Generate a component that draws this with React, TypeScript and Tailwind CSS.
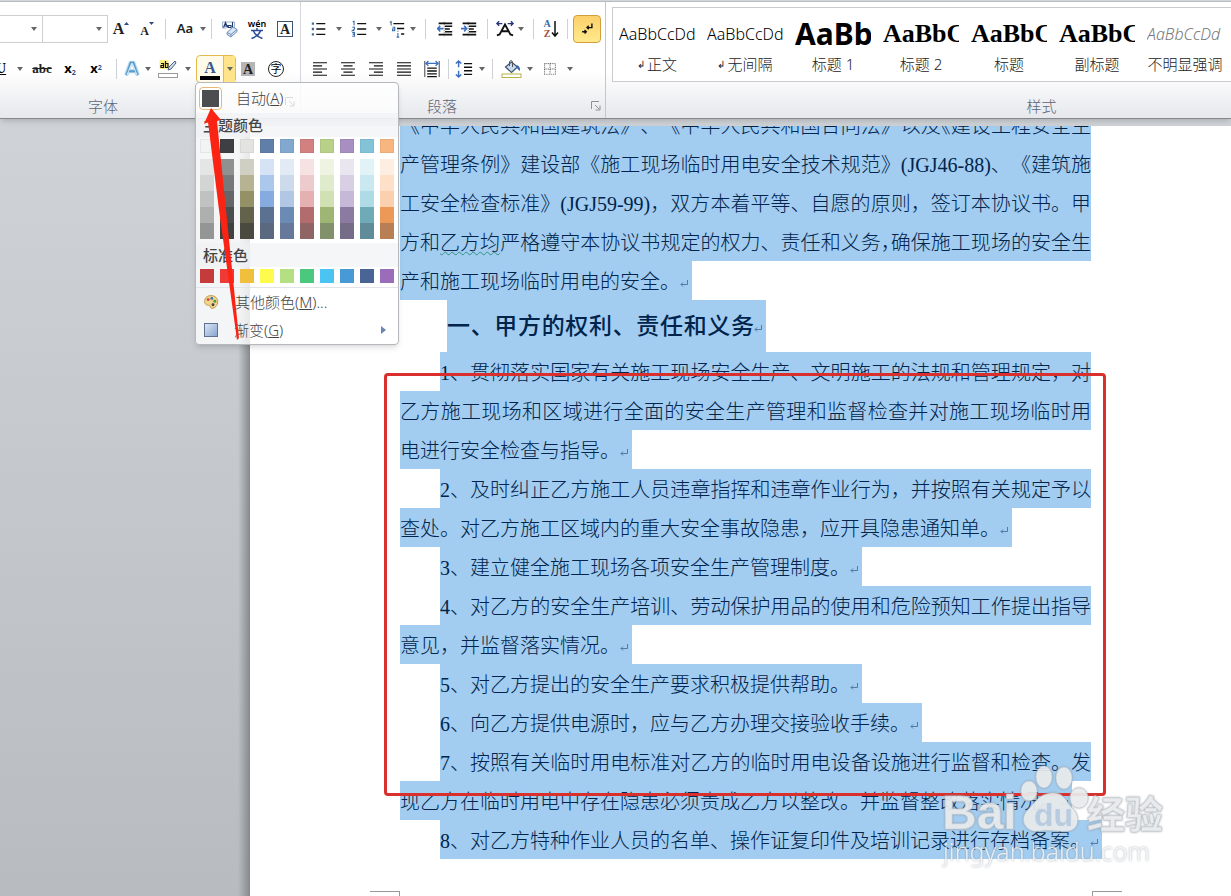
import type { ReactNode } from "react";

const themeColors = [
	["#f2f3f4", "#e4e6e6", "#d3d5d5", "#c0c2c2", "#aeb0b0", "#949696"],
	["#3d3f42", "#8f9191", "#77797a", "#646667", "#4a4c4d", "#3f4040"],
	["#e3e3df", "#cfcfc4", "#b5b391", "#959167", "#63624a", "#4a4a40"],
	["#5f7fa9", "#d5e3f5", "#abc8ec", "#85abe0", "#5a7192", "#5a6880"],
	["#83a8d0", "#e2eaf5", "#cddaec", "#b2c7e4", "#6b8bb5", "#67799a"],
	["#d28080", "#f6e2e3", "#edcbcc", "#e4b0b1", "#b36c6e", "#8f6464"],
	["#b9d089", "#eef4e1", "#e0ebcb", "#d2e1b4", "#9fb573", "#83916b"],
	["#a78fc1", "#eae6f0", "#d8cfe4", "#c6b9d8", "#8b7ba3", "#756c87"],
	["#83c3d8", "#e2f3f7", "#c9e8ef", "#aedbe5", "#6faab8", "#5f8c98"],
	["#f7b57f", "#feeee1", "#fedfc8", "#fbd0ae", "#ec9957", "#b97f54"],
];

const standardColors = ["#c43b3b", "#f03a36", "#f0bf3c", "#fefb4e", "#b5df83", "#4bc87d", "#4cc4f3", "#479ad6", "#4a6495", "#9a6cba"];

const styleList = [
	{ name: "正文", mark: true, sample: "AaBbCcDd", look: "text-[16px] font-light" },
	{ name: "无间隔", mark: true, sample: "AaBbCcDd", look: "text-[16px] font-light" },
	{ name: "标题 1", mark: false, sample: "AaBb", look: "text-[30px] font-bold" },
	{ name: "标题 2", mark: false, sample: "AaBbC", look: "font-['Liberation_Serif',serif] text-[26px] font-bold" },
	{ name: "标题", mark: false, sample: "AaBbC", look: "font-['Liberation_Serif',serif] text-[26px] font-bold" },
	{ name: "副标题", mark: false, sample: "AaBbC", look: "font-['Liberation_Serif',serif] text-[26px] font-bold" },
	{ name: "不明显强调", mark: false, sample: "AaBbCcDd", look: "text-[16px] font-light italic text-[#777]" },
];

const clauses = [
	{ text: "1、贯彻落实国家有关施工现场安全生产、文明施工的法规和管理规定，对", indent: true, end: false },
	{ text: "乙方施工现场和区域进行全面的安全生产管理和监督检查并对施工现场临时用", indent: false, end: false },
	{ text: "电进行安全检查与指导。", indent: false, end: true },
	{ text: "2、及时纠正乙方施工人员违章指挥和违章作业行为，并按照有关规定予以", indent: true, end: false },
	{ text: "查处。对乙方施工区域内的重大安全事故隐患，应开具隐患通知单。", indent: false, end: true },
	{ text: "3、建立健全施工现场各项安全生产管理制度。", indent: true, end: true },
	{ text: "4、对乙方的安全生产培训、劳动保护用品的使用和危险预知工作提出指导", indent: true, end: false },
	{ text: "意见，并监督落实情况。", indent: false, end: true },
	{ text: "5、对乙方提出的安全生产要求积极提供帮助。", indent: true, end: true },
	{ text: "6、向乙方提供电源时，应与乙方办理交接验收手续。", indent: true, end: true },
	{ text: "7、按照有关临时用电标准对乙方的临时用电设备设施进行监督和检查。发", indent: true, end: false },
	{ text: "现乙方在临时用电中存在隐患必须责成乙方以整改。并监督整改落实情况。", indent: false, end: true },
	{ text: "8、对乙方特种作业人员的名单、操作证复印件及培训记录进行存档备案。", indent: true, end: true },
];

function Icon({ children, size = "size-5" }: { children: ReactNode; size?: string }) {
	return (
		<svg viewBox="0 0 20 20" className={`${size} shrink-0 overflow-visible`} fill="none" stroke="#111" strokeWidth="1.6">
			{children}
		</svg>
	);
}

function Tool({ label, width, children }: { label: string; width: string; children: ReactNode }) {
	return (
		<button aria-label={label} className={`${width} flex h-7 shrink-0 items-center justify-center`}>
			{children}
		</button>
	);
}

function Arrow({ width = "w-2" }: { width?: string }) {
	return (
		<span className={`${width} flex shrink-0 justify-center`}>
			<svg viewBox="0 0 6 4" className="h-1 w-1.5"><path d="M0 0h6L3 4z" fill="#666" /></svg>
		</span>
	);
}

function Sep({ width }: { width: string }) {
	return (
		<span className={`${width} flex shrink-0 justify-center`}>
			<span className="h-5 w-px bg-[#cdd0d4]" />
		</span>
	);
}

function Launcher() {
	return (
		<svg viewBox="0 0 10 10" className="size-2.5" fill="none" stroke="#8b9099">
			<path d="M.5 8V.5H8M4 4l4 4M9 4.500V9H4.500" />
		</svg>
	);
}

function Return() {
	return (
		<svg viewBox="0 0 12 12" className="mt-1 size-3 shrink-0" fill="none" stroke="#4f7ba5">
			<path d="M7.500 2v4.500H1M3 4.500l-2 2 2 2" />
		</svg>
	);
}

function FontGroup() {
	return (
		<section className="flex w-[301px] shrink-0 flex-col border-r border-[#d3d6da] pt-[13px]">
			<div className="flex h-7 items-center">
				<label className="relative flex h-full w-[43px] items-center border-y border-r border-[#cfcfcf] bg-white">
					<select aria-label="字体" className="absolute inset-0 w-full appearance-none" />
					<span className="ml-auto pr-1"><Arrow /></span>
				</label>
				<label className="relative flex h-full w-[65px] items-center border-y border-r border-[#cfcfcf] bg-white">
					<select aria-label="字号" className="absolute inset-0 w-full appearance-none" />
					<span className="ml-auto pr-1"><Arrow /></span>
				</label>
				<Tool label="增大字体" width="w-[26px]">
					<span className="font-['Liberation_Serif',serif] text-base font-bold text-[#222]">A</span>
					<svg viewBox="0 0 5 3" className="mb-3 h-[3px] w-[5px]"><path d="M0 3h5L2.500 0z" fill="#2d4a7a" /></svg>
				</Tool>
				<Tool label="缩小字体" width="w-[26px]">
					<span className="pt-1 font-['Liberation_Serif',serif] text-xs font-bold text-[#222]">A</span>
					<svg viewBox="0 0 5 3" className="mb-3 h-[3px] w-[5px]"><path d="M0 0h5L2.500 3z" fill="#2d4a7a" /></svg>
				</Tool>
				<Sep width="w-[11px]" />
				<Tool label="更改大小写" width="w-7">
					<span className="text-[13px] font-semibold text-[#222]">Aa</span>
				</Tool>
				<Arrow />
				<Sep width="w-2" />
				<Tool label="清除格式" width="w-7">
					<Icon>
						<path d="M3.500 3h12v6M3.500 3v6h4" stroke="#9bb0cf" strokeWidth="1" />
						<path d="M4.500 8.500l2-5 2 5M5.200 7h2.600M9 6.500h3v2H9.500zM13.500 3v5.500" stroke="#1d3a70" strokeWidth="1.100" />
						<path d="M8 13.500l6-5.500 4 2.500v2L12 18l-4-2.500z" fill="#dbe6f5" stroke="#6f8db8" strokeWidth="1" />
						<path d="M8 13.500l4 2 6-5M12 15.500V18" stroke="#6f8db8" strokeWidth="1" />
					</Icon>
				</Tool>
				<Tool label="拼音指南" width="w-7">
					<span className="flex flex-col items-center text-[9px] leading-[8px] font-semibold">
						<span>wén</span>
						<svg viewBox="0 0 14 11" className="h-[11px] w-3.5" fill="none" stroke="#2b4c9b" strokeWidth="1.500">
							<path d="M7 0v2M1 2.500h12M3.500 3q2 5 9 7.500M10.500 3q-2 5-9 7.500" />
						</svg>
					</span>
				</Tool>
				<Tool label="字符边框" width="w-7">
					<span className="size-4 border border-[#3f5272] text-center font-['Liberation_Serif',serif] text-sm leading-[15px] font-bold text-[#222]">A</span>
				</Tool>
			</div>
			<div className="mt-3 flex h-7 items-center">
				<button aria-label="下划线" className="-ml-1 w-5 text-left font-['Liberation_Serif',serif] text-sm font-bold underline">U</button>
				<Arrow />
				<Tool label="删除线" width="w-9"><span className="font-['Liberation_Serif',serif] text-[13px] font-bold text-[#222] line-through">abc</span></Tool>
				<Tool label="下标" width="w-5"><span className="text-[13px] font-bold">x<sub className="text-[7px] text-[#2b4c8b]">2</sub></span></Tool>
				<Tool label="上标" width="w-8"><span className="text-[13px] font-bold">x<sup className="text-[7px] text-[#2b4c8b]">2</sup></span></Tool>
				<Sep width="w-2" />
				<Tool label="文本效果" width="w-6">
					<Icon size="size-[18px]">
						<path d="M3.500 17l5-14h3l5 14M6 12.500h8" stroke="#a9d7f0" strokeWidth="4.500" strokeLinejoin="round" />
						<path d="M3.500 17l5-14h3l5 14M6 12.500h8" stroke="#5d9cc9" strokeWidth="2" />
						<path d="M4.500 16.500L9.500 4h1l5 12.500" stroke="#fff" strokeWidth=".8" />
					</Icon>
				</Tool>
				<Arrow />
				<Tool label="突出显示" width="w-8">
					<Icon>
						<rect x="1.500" y="1" width="9" height="9" fill="#fbf180" stroke="none" />
						<path d="M3 4.500h2.500v4H3v-2h2.500M7.500 2v6.500h2.500v-4H7.500" strokeWidth="1.200" />
						<path d="M17 2l-6 6-1 3 3-1 5-6z" fill="#cfdcec" stroke="#49607f" strokeWidth="1" />
						<rect x=".5" y="14.500" width="19" height="4" fill="#fff" stroke="#9a9a9a" strokeWidth="1" />
					</Icon>
				</Tool>
				<Arrow />
				<div className="relative ml-1 flex h-7 w-10 rounded-sm border border-[#e3bb4e] bg-[#fffbe8]">
					<button aria-label="字体颜色" className="flex w-[26px] flex-col items-center justify-end pb-0.5">
						<span className="font-['Liberation_Serif',serif] text-base leading-4 font-bold text-[#36588e]">A</span>
						<span className="h-1 w-5 bg-black" />
					</button>
					<button aria-label="更多字体颜色" className="flex flex-1 items-center justify-center border-l border-[#e3bb4e] bg-[#ffe48a]"><Arrow /></button>
					<ColorMenu />
				</div>
				<Tool label="字符底纹" width="w-6">
					<span className="size-3.5 bg-[#b5b5b5] text-center font-['Liberation_Serif',serif] text-sm leading-[15px] font-bold text-[#222]">A</span>
				</Tool>
				<Tool label="带圈字符" width="w-8">
					<span className="size-4 rounded-full border border-[#222] text-center text-[11px] leading-[14px]">字</span>
				</Tool>
			</div>
			<h2 className="mt-auto pr-[94px] pb-px text-center text-[15px] font-light text-[#5c6675]">字体</h2>
		</section>
	);
}

function ColorMenu() {
	return (
		<div className="absolute top-full -left-0.5 z-20 w-[204px] rounded-sm border border-[#b5b8bc] bg-white/80 text-[15px] font-light text-[#444] shadow-md">
			<button className="flex h-[30px] w-full items-center gap-3.5 pl-[3px]">
				<span className="size-[23px] rounded-sm border border-[#e8b878] bg-white/80 p-0.5"><span className="block size-full bg-[#4c4d4f]" /></span>
				<span>自动(<u>A</u>)</span>
				<span className="-ml-3 pt-2 opacity-30"><Launcher /></span>
			</button>
			<h3 className="h-6 bg-[#eef0f3]/60 pl-[7px] leading-6 font-medium">主题颜色</h3>
			<div className="flex gap-1.5 pt-0.5 pl-1">
				{themeColors.map(([base, ...shades]) => (
					<div key={base} className="w-3.5">
						<button aria-label={base} className="mb-1.5 block h-3.5 w-full border border-black/5" style={{ backgroundColor: base }} />
						{shades.map((shade) => (
							<button key={shade} aria-label={shade} className="block h-4 w-full" style={{ backgroundColor: shade }} />
						))}
					</div>
				))}
			</div>
			<h3 className="mt-1 h-6 bg-[#eef0f3]/60 pl-[7px] leading-6 font-medium">标准色</h3>
			<div className="flex gap-1.5 border-b border-[#e2e4e7] pt-0.5 pb-1 pl-1">
				{standardColors.map((color) => (
					<button key={color} aria-label={color} className="size-3.5" style={{ backgroundColor: color }} />
				))}
			</div>
			<button className="flex h-7 w-full items-center pl-[7px]">
				<Icon size="size-4">
					<path d="M10 2c5 0 8.500 3 8.500 7.500S15 18 11 18c-2.500 0-1-3-3-3.500S2 14 2 9.500 5 2 10 2z" fill="#f0d489" stroke="#b38b3b" strokeWidth="1" />
					<g stroke="none">
						<circle cx="6.500" cy="7" r="1.800" fill="#d1423a" />
						<circle cx="11" cy="5.500" r="1.800" fill="#3d6fb5" />
						<circle cx="14.800" cy="9" r="1.800" fill="#4c9a4a" />
						<circle cx="12.500" cy="13.500" r="1.800" fill="#444" />
					</g>
				</Icon>
				<span className="ml-4">其他颜色(<u>M</u>)...</span>
			</button>
			<button className="flex h-7 w-full items-center pr-3 pl-2">
				<span className="size-3.5 border border-[#5f7391] bg-linear-to-br from-[#dbe7f7] to-[#88a5cd]" />
				<span className="ml-4">渐变(<u>G</u>)</span>
				<svg viewBox="0 0 5 8" className="ml-auto h-2 w-[5px]"><path d="M0 0l5 4-5 4z" fill="#6b86b5" /></svg>
			</button>
		</div>
	);
}

function ParagraphGroup() {
	return (
		<section className="relative flex w-[305px] shrink-0 flex-col border-r border-[#c4c8cd] pt-[13px]">
			<div className="flex h-7 items-center pl-1">
				<Tool label="项目符号" width="w-7">
					<Icon size="size-[18px]">
						<path d="M7 4h10M7 10h10M7 16h10" />
						<path d="M2 4h2.500M2 10h2.500M2 16h2.500" stroke="#44689f" strokeWidth="2.600" />
					</Icon>
				</Tool>
				<Arrow width="w-3" />
				<Tool label="编号" width="w-7">
					<Icon size="size-[18px]">
						<path d="M8 4h10M8 10h10M8 16h10" />
						<path d="M3 2l1.500-.5V6M2.500 8h2.500v2l-2.500 2H5M2.500 14H5v4H2.500M3 16h2" stroke="#3a6ea5" strokeWidth="1.200" />
					</Icon>
				</Tool>
				<Arrow width="w-3" />
				<Tool label="多级列表" width="w-6">
					<Icon size="size-[18px]">
						<path d="M6 4h12M10 9.500h8M14.500 15.500h3.500" />
						<path d="M2 2.500l1.500-.8V6M5 8h2.500v4H5v-2h2.500M11 12v1M11 14.500V19M9.500 19h3" stroke="#3a6ea5" strokeWidth="1.200" />
					</Icon>
				</Tool>
				<Arrow />
				<Sep width="w-4" />
				<Tool label="减少缩进量" width="w-6">
					<Icon size="size-4">
						<path d="M2 3h17M10 6.500h9M10 10h6M10 13.500h9M2 17h17" strokeWidth="2" />
						<path d="M9 1v18" strokeWidth="1" strokeDasharray="1 1.500" />
						<path d="M8 9.500H0M4 6l-3 3.500L4 13" stroke="#3a6ec0" strokeWidth="2" />
					</Icon>
				</Tool>
				<Tool label="增加缩进量" width="w-6">
					<Icon size="size-4">
						<path d="M2 3h17M10 6.500h9M10 10h6M10 13.500h9M2 17h17" strokeWidth="2" />
						<path d="M9 1v18" strokeWidth="1" strokeDasharray="1 1.500" />
						<path d="M0 9.500h7M4 6l3 3.500L4 13" stroke="#3a6ec0" strokeWidth="2" />
					</Icon>
				</Tool>
				<Sep width="w-3" />
				<Tool label="中文版式" width="w-6">
					<Icon size="size-[18px]">
						<path d="M1 17l3-1L10 5l6 11 3 1M5.500 12.500h9" strokeWidth="2" />
						<path d="M1 4h6M3.500 1.500L1 4l2.500 2.500M19 4h-6M16.500 1.500L19 4l-2.500 2.500" stroke="#23357a" strokeWidth="1.500" />
					</Icon>
				</Tool>
				<Arrow />
				<Sep width="w-4" />
				<Tool label="排序" width="w-5">
					<span className="flex flex-col font-['Liberation_Serif',serif] text-[10px] leading-[10px] font-bold">
						<span className="text-[#3567a8]">A</span>
						<span className="text-[#a34a44]">Z</span>
					</span>
					<svg viewBox="0 0 8 18" className="h-[18px] w-2" fill="none" stroke="#111" strokeWidth="1.500"><path d="M4 1v15M1 12.500l3 3.500 3-3.500" /></svg>
				</Tool>
				<Sep width="w-3" />
				<button aria-label="显示编辑标记" className="flex size-7 items-center justify-center rounded-sm border border-[#d1a03c] bg-linear-to-b from-[#fbd06a] to-[#ffe98c]">
					<Icon size="size-3.5">
						<path d="M17 2v6H10M12.500 5.500L10 8l2.500 2.500M3 14h6M6.500 11.500L9 14l-2.500 2.500" strokeWidth="2" />
					</Icon>
				</button>
			</div>
			<div className="mt-3 flex h-7 items-center pl-[5px]">
				<Tool label="左对齐" width="w-7"><Icon size="size-3.5"><path d="M0 1h20M0 5.500h13M0 10h20M0 14.500h13M0 19h20" /></Icon></Tool>
				<Tool label="居中" width="w-7"><Icon size="size-3.5"><path d="M0 1h20M3.500 5.500h13M0 10h20M3.500 14.500h13M0 19h20" /></Icon></Tool>
				<Tool label="右对齐" width="w-7"><Icon size="size-3.5"><path d="M0 1h20M7 5.500h13M0 10h20M7 14.500h13M0 19h20" /></Icon></Tool>
				<Tool label="两端对齐" width="w-7"><Icon size="size-3.5"><path d="M0 1h20M0 5.500h20M0 10h20M0 14.500h20M0 19h20" /></Icon></Tool>
				<Tool label="分散对齐" width="w-7">
					<Icon size="size-4">
						<path d="M1 0v20M19 0v20" strokeWidth="1" />
						<path d="M4 9h12M4 12.500h12M4 16h12M4 19.500h12" />
						<path d="M2 3h16M5.500 0l-3 3 3 3M14.500 0l3 3-3 3" stroke="#3a6ec0" />
					</Icon>
				</Tool>
				<Sep width="w-1" />
				<Tool label="行距" width="w-7">
					<Icon size="size-[18px]">
						<path d="M10 4h9M10 8h9M10 12h9M10 16h9" />
						<path d="M4 1v7M1 4l3-3 3 3M4 19v-7M1 16l3 3 3-3" stroke="#3a6ec0" />
					</Icon>
				</Tool>
				<Arrow />
				<Sep width="w-3" />
				<Tool label="底纹" width="w-7">
					<Icon>
						<path d="M3.500 8l6-5 6 5-6 5.500z" fill="#c9d9ed" stroke="#3d5474" strokeWidth="1.200" />
						<path d="M7.500 7V2.500q2-2 3 0V8" stroke="#555" strokeWidth="1" />
						<path d="M14.500 6q4 1 3.500 6-2-1.500-3.500-3.500z" fill="#3566ae" stroke="none" />
						<rect x="0" y="15" width="19" height="3.500" fill="#fff" stroke="#b8b04a" strokeWidth="1" />
					</Icon>
				</Tool>
				<Arrow />
				<Tool label="框线" width="w-8">
					<Icon size="size-3">
						<path d="M1 1h18v18M1 1v18M10 1v18M1 10h18" strokeWidth="1.200" strokeDasharray="1.500 1.500" />
						<path d="M0 19h20" stroke="#777" strokeDasharray="1.500 1.500" />
					</Icon>
				</Tool>
				<Arrow />
			</div>
			<div className="mt-auto flex items-center justify-between pr-1 pb-px pl-[126px]">
				<h2 className="text-[15px] font-light text-[#5c6675]">段落</h2>
				<button aria-label="段落设置"><Launcher /></button>
			</div>
		</section>
	);
}

function StyleGroup() {
	return (
		<section className="flex min-w-0 flex-1 flex-col pt-[5px] pl-1.5">
			<div className="flex h-[75px] overflow-hidden border border-r-0 border-[#c9cbce] bg-white">
				{styleList.map((item) => (
					<button key={item.name} className="flex w-[88px] shrink-0 flex-col items-center pt-1.5">
						<span className={`${item.look} h-10 w-[76px] overflow-hidden text-left leading-10 whitespace-nowrap`}>
							{item.sample}
						</span>
						<span className="flex items-center gap-0.5 text-[15px] leading-5 font-light whitespace-nowrap text-[#222]">
							{item.mark && <span className="text-[10px]">↲</span>}
							{item.name}
						</span>
					</button>
				))}
			</div>
			<h2 className="mt-auto pb-px pl-60 text-center text-[15px] font-light text-[#5c6675]">样式</h2>
		</section>
	);
}

function Row({ children, indent, end }: { children: ReactNode; indent?: boolean; end?: boolean }) {
	return (
		<p className={`flex h-[39px] w-[691px] shrink-0 ${indent ? "pl-10" : ""}`}>
			<span className={`flex items-center bg-[#a3cdf0] pt-[3px] whitespace-nowrap ${end ? "shrink-0" : "w-full"}`}>
				<span className={end ? "" : "w-full [text-align-last:justify]"}>{children}</span>
				{end && <Return />}
			</span>
		</p>
	);
}

function Watermark() {
	return (
		<svg viewBox="0 0 224 108" className="absolute top-[636px] left-[692px] h-[108px] w-[224px] drop-shadow-[0_0_1px_#8a949e]" fill="#fff" fillOpacity=".75" stroke="#c3cad1" strokeOpacity=".6" fontFamily="'Noto Sans', 'Noto Sans CJK SC', sans-serif">
			<text x="0" y="67" fontFamily="'Liberation Sans', sans-serif" fontSize="48" fontWeight="bold" strokeWidth="1">Bai</text>
			<ellipse cx="87" cy="29" rx="8" ry="10" />
			<ellipse cx="102" cy="15" rx="8" ry="11" />
			<ellipse cx="122" cy="16" rx="8" ry="11" />
			<ellipse cx="137" cy="36" rx="9" ry="10" />
			<path d="M112 31c10 0 12 9 18 15 8 7 8 22-4 23-9 1-20-2-29 0-13 2-20-11-12-20 8-8 12-18 27-18z" />
			<text x="92" y="64" fontFamily="'Liberation Sans', sans-serif" fontSize="32" fontWeight="bold" fill="#a9c3dd" stroke="none">du</text>
			<text x="145" y="66" fontSize="38" fontWeight="bold">经验</text>
			<text x="1" y="99" fontSize="25" stroke="none">jingyan.baidu.com</text>
		</svg>
	);
}

function Document() {
	return (
		<article className="relative flex min-w-0 flex-1 flex-col overflow-hidden bg-white pl-[150px] font-['Liberation_Serif','Noto_Sans_CJK_SC',serif] text-[20px] leading-[36px] font-light text-[#00244c] [text-spacing-trim:space-all]">
			{/* the first line is scrolled halfway under the ribbon */}
			<div className="flex h-[18px] flex-col justify-end overflow-hidden">
				<Row>《中华人民共和国建筑法》、《中华人民共和国合同法》以及<span className="[font-feature-settings:'halt']">《</span>建设工程安全生</Row>
			</div>
			<Row>产管理条例》建设部《施工现场临时用电安全技术规范》(JGJ46-88)、《建筑施</Row>
			<Row>工安全检查标准》(JGJ59-99)，双方本着平等、自愿的原则，签订本协议书。甲</Row>
			<Row>方和<span className="underline decoration-[#2f9080] decoration-wavy decoration-1 underline-offset-1">乙方均</span>严格遵守本协议书规定的权力、责任和义务<span className="[font-feature-settings:'halt']">，</span>确保施工现场的安全生</Row>
			<Row end>产和施工现场临时用电的安全。</Row>
			<h1 className="ml-[47px] flex h-[52px] w-[319px] items-center bg-[#a3cdf0] pt-0.5 text-[23px] font-medium">
				<span className="w-[307px] whitespace-nowrap [text-align-last:justify]">一、甲方的权利、责任和义务</span>
				<Return />
			</h1>
			{clauses.map((clause) => (
				<Row key={clause.text} indent={clause.indent} end={clause.end}>{clause.text}</Row>
			))}
			<div className="mt-8 flex">
				<span className="-ml-[30px] h-[5px] w-[30px] border-t border-r border-[#999]" />
				<span className="ml-[692px] h-[5px] w-[30px] border-t border-l border-[#999]" />
			</div>
			<div className="absolute top-[247px] left-[134px] h-[423px] w-[722px] rounded border-3 border-[#da302d]" />
			<Watermark />
		</article>
	);
}

export default function App() {
	return (
		<div className="relative flex min-h-screen flex-col overflow-hidden bg-linear-to-b from-[#d3d6da] to-[#b8bbc0] font-['Noto_Sans','Noto_Sans_CJK_SC',sans-serif] text-black">
			<header className="relative z-10 mt-px flex h-[118px] border-t border-b border-t-[#b9bcc0] border-b-[#84878b] bg-linear-to-b from-white from-60% to-[#e6e8ec] shadow-md">
				<FontGroup />
				<ParagraphGroup />
				<StyleGroup />
			</header>
			<main className="flex flex-1 pt-[7px]">
				<div className="flex w-[250px] shrink-0 justify-end">
					<div className="w-3 bg-linear-to-r from-transparent to-[#85888c]" />
				</div>
				<Document />
			</main>
			<svg viewBox="0 0 40 236" className="absolute top-[106px] left-[202px] z-20 h-[236px] w-10">
				<path d="M9 2L2 18l4-2 11 88 18 130 2-2-13-128-9-89 4-1z" fill="#fb2414" />
			</svg>
		</div>
	);
}
